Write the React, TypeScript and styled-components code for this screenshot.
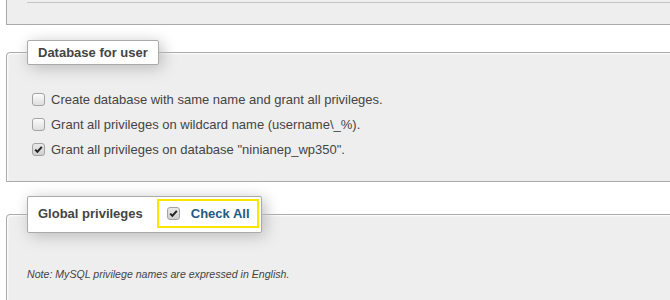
import React from 'react';
import styled, { createGlobalStyle } from 'styled-components';

const Global = createGlobalStyle`
  html, body { margin: 0; padding: 0; background: #fff; overflow: hidden; }
  body {
    font-family: "Liberation Sans", Arial, sans-serif;
    color: #444;
    font-size: 13px;
  }
`;

const Page = styled.div`
  width: 670px;
  height: 300px;
  overflow: hidden;
  box-sizing: border-box;
  padding-left: 6px;
  display: flex;
  flex-direction: column;
`;

const FieldsetTail = styled.div`
  flex: none;
  height: 25px;
  box-sizing: border-box;
  margin-right: -10px;
  background: #eee;
  border: 1px solid #aaa;
  border-top: none;
  padding: 2px 0 0 20px;
  display: flex;
  flex-direction: column;
`;

const Rule = styled.div`
  border-top: 1px solid #c4c4c4;
`;

const Fieldset = styled.fieldset<{ $mt: number; $pb: number }>`
  flex: none;
  margin: ${(p) => p.$mt}px -10px 0 0;
  padding: 0 20px ${(p) => p.$pb}px 20px;
  border: 1px solid #aaa;
  border-radius: 4px 4px 0 0;
  background: #eee;
  box-shadow: inset 1px 1px 2px #fff;
  min-width: 0;
`;

const Legend = styled.legend<{ $pad: string }>`
  padding: ${(p) => p.$pad};
  border: 1px solid #aaa;
  border-radius: 2px;
  background: #fff;
  box-shadow: 3px 3px 15px #bbb;
  font-weight: bold;
  color: #444;
  font-size: 13px;
  line-height: 13px;
`;

const LegendRow = styled.div`
  display: flex;
  align-items: center;
`;

const Highlight = styled.label`
  display: flex;
  align-items: center;
  gap: 11px;
  height: 25px;
  margin-left: 14px;
  padding: 0 7px 0 8px;
  border: 2px solid #fbe600;
  color: #235a81;
  font-weight: bold;
  cursor: pointer;
`;

const List = styled.div`
  display: flex;
  flex-direction: column;
  padding: 22px 0 0 5px;
`;

const Row = styled.label`
  display: flex;
  align-items: center;
  gap: 6px;
  height: 25px;
  font-size: 13px;
  color: #444;
`;

const Box = styled.span<{ $checked: boolean }>`
  display: inline-flex;
  align-items: center;
  justify-content: center;
  width: 13px;
  height: 13px;
  box-sizing: border-box;
  border: 1px solid #a3a3a3;
  border-radius: 3px;
  background: ${(p) =>
    p.$checked
      ? 'linear-gradient(#e8e8e8, #d0d0d0)'
      : 'linear-gradient(#fbfbfb, #dedede)'};
  flex: none;
`;

const Note = styled.p`
  margin: 0;
  padding: 35px 0 0 0;
  font-size: 10.6px;
  font-style: italic;
  color: #444;
  line-height: 12px;
`;

const Checkbox = ({ checked }: { checked: boolean }) => (
  <Box $checked={checked}>
    {checked && (
      <svg width="11" height="11" viewBox="0 0 11 11">
        <path d="M2.2 5.6 L4.4 7.8 L8.8 2.8" stroke="#222" strokeWidth="2" fill="none" />
      </svg>
    )}
  </Box>
);

const options = [
  { label: 'Create database with same name and grant all privileges.', checked: false },
  { label: 'Grant all privileges on wildcard name (username\\_%).', checked: false },
  { label: 'Grant all privileges on database "ninianep_wp350".', checked: true },
];

export default function App() {
  return (
    <>
      <Global />
      <Page>
        <FieldsetTail>
          <Rule />
        </FieldsetTail>
        <Fieldset $mt={15} $pb={19}>
          <Legend $pad="5px 10px">Database for user</Legend>
          <List>
            {options.map((o) => (
              <Row key={o.label}>
                <Checkbox checked={o.checked} />
                {o.label}
              </Row>
            ))}
          </List>
        </Fieldset>
        <Fieldset $mt={14} $pb={40}>
          <Legend $pad="2px 2px 4px 10px">
            <LegendRow>
              Global privileges
              <Highlight>
                <Checkbox checked />
                Check All
              </Highlight>
            </LegendRow>
          </Legend>
          <Note>Note: MySQL privilege names are expressed in English.</Note>
        </Fieldset>
      </Page>
    </>
  );
}
